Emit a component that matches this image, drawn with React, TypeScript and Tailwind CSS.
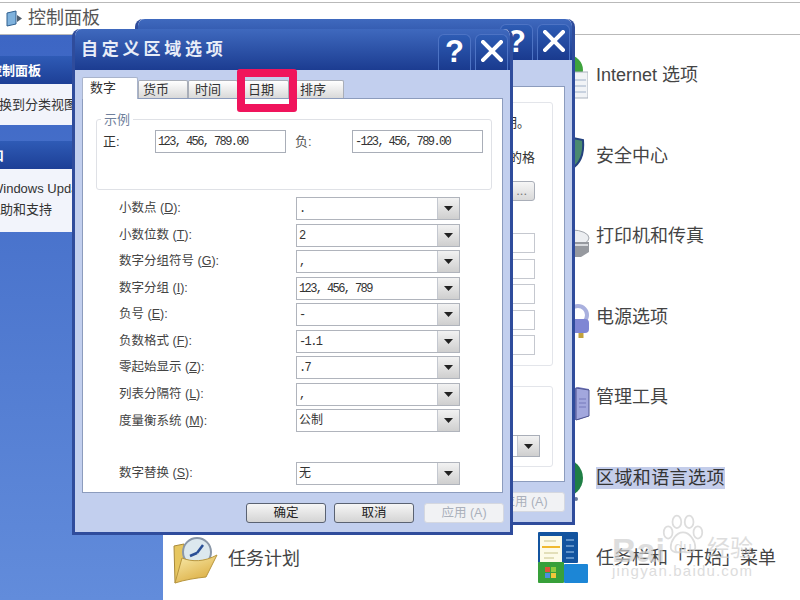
const selectRows = [
  { label: '小数点', key: 'D', value: '.' },
  { label: '小数位数', key: 'T', value: '2' },
  { label: '数字分组符号', key: 'G', value: ',' },
  { label: '数字分组', key: 'I', value: '123, 456, 789' },
  { label: '负号', key: 'E', value: '-' },
  { label: '负数格式', key: 'F', value: '-1.1' },
  { label: '零起始显示', key: 'Z', value: '.7' },
  { label: '列表分隔符', key: 'L', value: ',' },
  { label: '度量衡系统', key: 'M', value: '公制' },
];

const tabs = [
  { name: '货币', cls: 'w-[50px] pl-[4px]' },
  { name: '时间', cls: 'w-[50px] pl-[6px]' },
  { name: '日期', cls: 'w-[51px] pl-[9px]' },
  { name: '排序', cls: 'w-[55px] pl-[10px]' },
];

function DropButton() {
  return (
    <div className="flex h-full w-[22px] shrink-0 items-center justify-center border-l border-[#c4c8d0] bg-gradient-to-b from-[#f2f2f2] to-[#cfcfcf]">
      <svg width="9" height="5" viewBox="0 0 9 5">
        <path d="M0 0h9L4.5 5z" fill="#222" />
      </svg>
    </div>
  );
}

function SelectBox({ value }: { value: string }) {
  return (
    <div className="flex h-[23px] w-[164px] items-center border border-[#b0b4bc] bg-white">
      <span className="flex-1 pl-[2px] pt-[1px] font-['Liberation_Mono','Noto_Sans_CJK_SC',monospace] text-[12px] tracking-[-1.6px] text-[#333]">
        {value === '公制' || value === '无' ? <span className="tracking-normal">{value}</span> : value}
      </span>
      <DropButton />
    </div>
  );
}

function FormRow({ label, hotkey, value }: { label: string; hotkey: string; value: string }) {
  return (
    <div className="flex items-center">
      <div className="w-[177px] text-[12.5px] text-[#444]">
        {label} (<span className="underline">{hotkey}</span>):
      </div>
      <SelectBox value={value} />
    </div>
  );
}

function WinButton({ children, label }: { children: React.ReactNode; label: string }) {
  return (
    <div
      aria-label={label}
      className="flex h-[36px] w-[33px] items-center justify-center rounded-t-[6px] border border-b-0 border-[#4d73c4] bg-gradient-to-b from-[#2e5cb4] to-[#1a3a8e] font-['Liberation_Sans',sans-serif] text-[31px] font-bold text-white"
    >
      {children}
    </div>
  );
}

function CloseGlyph() {
  return (
    <svg className="-mt-[3px]" width="22" height="22" viewBox="0 0 22 22">
      <path d="M2 2l18 18M20 2L2 20" stroke="#fff" strokeWidth="4" strokeLinecap="square" />
    </svg>
  );
}

function TitleBar({ title }: { title?: string }) {
  return (
    <div className="flex h-[41px] shrink-0 items-end justify-between rounded-t-[7px] bg-gradient-to-b from-[#3f69be] to-[#1c3c91] pl-[6px] pr-[2px]">
      <div className="self-center pt-[1px] text-[17px] font-bold tracking-[3.8px] text-[#e8edf8]">{title}</div>
      <div className="flex gap-[4px]">
        <WinButton label="help">?</WinButton>
        <WinButton label="close">
          <CloseGlyph />
        </WinButton>
      </div>
    </div>
  );
}

function DlgButton({ children, disabled }: { children: React.ReactNode; disabled?: boolean }) {
  return (
    <div
      className={
        disabled
          ? 'flex h-[20px] w-[80px] items-center justify-center rounded-[3px] border border-[#d5d8e0] bg-[#f1f2f4] text-[12.5px] text-[#aab0bb]'
          : 'flex h-[20px] w-[80px] items-center justify-center rounded-[3px] border border-[#5a6272] bg-gradient-to-b from-[#f6f6f6] to-[#d4d4d4] text-[12.5px] text-[#222]'
      }
    >
      {children}
    </div>
  );
}

function Tabs() {
  return (
    <div className="flex h-[20px] items-end">
      <div className="z-10 flex h-[22px] w-[56px] translate-y-[1px] items-center rounded-t-[2px] border border-b-0 border-[#a9b4cc] bg-white pb-[1px] pl-[7px] text-[13px] text-[#333]">
        数字
      </div>
      {tabs.map((t) => (
        <div
          key={t.name}
          className={`flex h-[18px] items-center rounded-t-[2px] border border-b-0 border-[#a9aeb8] bg-gradient-to-b from-[#ffffff] to-[#d9d9d9] text-[13px] text-[#333] ${t.cls}`}
        >
          {t.name}
        </div>
      ))}
    </div>
  );
}

function FrontDialog() {
  return (
    <div className="absolute left-[72px] top-[29px] z-20 flex h-[506px] w-[441px] flex-col rounded-t-[8px] border-[3px] border-t-0 border-[#2f4c9c] bg-[#c2cfee]">
      <TitleBar title="自定义区域选项" />
      <div className="px-[7px] pt-[8px]">
        <Tabs />
        <div className="h-[395px] border border-[#8c9cbd] bg-white">
          <div className="relative ml-[13px] mt-[20px] h-[71px] w-[396px] rounded-[3px] border border-[#dfe1e6]">
            <span className="absolute -top-[10px] left-[4px] bg-white px-[3px] text-[13px] text-[#6f7f9c]">示例</span>
            <div className="flex items-center pl-[6px] pt-[10px]">
              <span className="w-[52px] text-[13px] text-[#333]">正:</span>
              <div className="flex h-[23px] w-[131px] items-center border border-[#a9aeb8] pl-[2px] font-['Liberation_Mono',monospace] text-[12px] tracking-[-1.6px] text-[#333]">
                123, 456, 789.00
              </div>
              <span className="ml-[9px] w-[57px] text-[13px] text-[#555]">负:</span>
              <div className="flex h-[23px] w-[131px] items-center border border-[#a9aeb8] pl-[2px] font-['Liberation_Mono',monospace] text-[12px] tracking-[-1.6px] text-[#333]">
                -123, 456, 789.00
              </div>
            </div>
          </div>
          <div className="ml-[36px] mt-[7px] flex flex-col gap-[3.55px]">
            {selectRows.map((r) => (
              <FormRow key={r.key} label={r.label} hotkey={r.key} value={r.value} />
            ))}
            <div className="mt-[26px]">
              <FormRow label="数字替换" hotkey="S" value="无" />
            </div>
          </div>
        </div>
        <div className="-mr-[1px] flex justify-end gap-[8px] pt-[10px]">
          <DlgButton>确定</DlgButton>
          <DlgButton>取消</DlgButton>
          <div className="ml-[2px]">
            <DlgButton disabled>应用 (A)</DlgButton>
          </div>
        </div>
      </div>
      {/* 日期 tab highlighted by the author of the screenshot */}
      <div className="absolute left-[162px] top-[40px] h-[43px] w-[60px] rounded-[3px] border-[8px] border-[#f0145c]" />
    </div>
  );
}

function BackDialog() {
  const inputs = ['mt-[32px]', 'mt-[6px]', 'mt-[5px]', 'mt-[6px]', 'mt-[5px]'];
  return (
    <div className="absolute left-[135px] top-[19px] z-10 flex h-[506px] w-[440px] flex-col rounded-t-[8px] border-[3px] border-t-0 border-[#2f4c9c] bg-[#c2cfee]">
      <TitleBar />
      <div className="px-[7px] pt-[26px]">
        <div className="h-[396px] border border-[#8c9cbd] bg-white pl-[20px] pr-[11px] pt-[15px]">
          <div className="flex h-[264px] flex-col items-end rounded-[3px] border border-[#e3e5ea] pr-[17px] pt-[10px] text-[13px] text-[#333]">
            <div className="pr-[5px]">日期。</div>
            <div className="mt-[15px]">的格</div>
            <div className="mt-[14px] flex h-[20px] w-[80px] items-center justify-end rounded-[3px] border border-[#a9aeb8] bg-gradient-to-b from-[#f6f6f6] to-[#d9d9d9] pr-[7px] text-[#777]">
              ...
            </div>
            {inputs.map((m, i) => (
              <div key={i} className={`h-[20px] w-[60px] border border-[#c5c8cf] ${m}`} />
            ))}
          </div>
          <div className="mt-[20px] flex h-[81px] items-end justify-end rounded-[3px] border border-[#e3e5ea] pb-[9px] pr-[12px]">
            <div className="flex h-[22px] w-[80px] justify-end border border-[#a9aeb8]">
              <DropButton />
            </div>
          </div>
        </div>
        <div className="flex justify-end pt-[10px]">
          <DlgButton disabled>应用 (A)</DlgButton>
        </div>
      </div>
    </div>
  );
}

function SidePanel({ title, titleClass, bodyClass, children }: { title: string; titleClass: string; bodyClass: string; children: React.ReactNode }) {
  return (
    <div>
      <div className="flex h-[28px] items-center bg-gradient-to-b from-[#2f5bb6] to-[#1d3f96] pt-[2px] text-[13px] font-bold text-white">
        <span className={titleClass}>{title}</span>
      </div>
      <div className={`bg-[#f2f4fb] text-[13px] text-[#333] ${bodyClass}`}>{children}</div>
    </div>
  );
}

function InternetIcon() {
  return (
    <svg width="50" height="48" viewBox="0 0 50 48">
      <circle cx="30" cy="19" r="15" fill="#3fa33d" />
      <rect x="20" y="21" width="30" height="26" fill="#f1f3f6" stroke="#aab2be" />
      <path d="M37 29h11M37 35h11M37 41h11" stroke="#9fb0c8" />
    </svg>
  );
}

function ShieldIcon() {
  return (
    <svg width="48" height="48" viewBox="0 0 48 48">
      <path d="M10 9l25-3 10 2c1 12-1 23-12 29C20 33 10 24 10 9z" fill="#4a8a70" stroke="#24427e" strokeWidth="2" />
    </svg>
  );
}

function PrinterIcon() {
  return (
    <svg width="52" height="48" viewBox="0 0 52 48">
      <ellipse cx="34" cy="26" rx="17" ry="8" fill="#eceef1" stroke="#a2a6ad" />
      <path d="M16 30h35v10l-8 5H16z" fill="#96999f" />
      <path d="M37 33h13" stroke="#d8dade" strokeWidth="2" />
    </svg>
  );
}

function PowerIcon() {
  return (
    <svg width="52" height="48" viewBox="0 0 52 48">
      <circle cx="40" cy="22" r="9" fill="none" stroke="#a9b0de" strokeWidth="4" />
      <rect x="22" y="26" width="29" height="14" rx="4" fill="#7f86d4" />
      <path d="M43 40v5" stroke="#c2a23c" strokeWidth="5" />
    </svg>
  );
}

function AdminIcon() {
  return (
    <svg width="52" height="48" viewBox="0 0 52 48">
      <path d="M20 20l20-6 11 2v27l-11 4H20z" fill="#777cc4" />
      <path d="M38 15l13 2v26l-13 4z" fill="#a2a7dd" stroke="#4f548f" />
      <path d="M41 26h7M41 30h7M41 34h7" stroke="#7479bb" />
    </svg>
  );
}

function GlobeIcon() {
  return (
    <svg width="48" height="48" viewBox="0 0 48 48">
      <circle cx="26" cy="24" r="19" fill="#1f7f45" />
      <circle cx="38" cy="45" r="2" fill="#6a7a99" />
    </svg>
  );
}

function TaskbarIcon() {
  return (
    <svg width="50" height="52" viewBox="0 0 50 52">
      <rect x="0" y="0" width="40" height="31" rx="1" fill="#13549f" />
      <rect x="2" y="4" width="22" height="27" fill="#fdfbe8" />
      <path d="M4 15h18" stroke="#f0b92e" strokeWidth="2" />
      <path d="M6 9h12M6 21h14M6 26h10" stroke="#c9c48a" />
      <path d="M28 8h8M28 14h8M28 20h8M28 26h8" stroke="#a9cdf0" />
      <rect x="0" y="30" width="26" height="21" rx="1" fill="#38a03a" />
      <rect x="26" y="32" width="24" height="19" rx="1" fill="#1c86d6" />
      <rect x="7" y="35" width="5" height="5" fill="#e0523a" />
      <rect x="13" y="35" width="5" height="5" fill="#8ecb40" />
      <rect x="7" y="41" width="5" height="5" fill="#4a8fe0" />
      <rect x="13" y="41" width="5" height="5" fill="#f0c63a" />
    </svg>
  );
}

function FolderClockIcon() {
  return (
    <svg width="46" height="48" viewBox="0 0 46 48">
      <defs>
        <linearGradient id="folderFront" x1="0" y1="0" x2="0.6" y2="1">
          <stop offset="0" stopColor="#f9ecae" />
          <stop offset="1" stopColor="#dcae42" />
        </linearGradient>
      </defs>
      <path d="M2 10l10-2v32L3 47z" fill="#e6c660" stroke="#a98a3a" />
      <circle cx="25" cy="16" r="14" fill="#dce8ee" stroke="#8a97a8" strokeWidth="2" />
      <path d="M25 17l6-8M25 17l-7 3" stroke="#2a4f96" strokeWidth="2.5" />
      <path d="M3 47l7-25c10 4 22 4 35-3L34 41c-10 1-22 3-31 6z" fill="url(#folderFront)" stroke="#b8963e" />
    </svg>
  );
}

const rightItems = [
  { text: 'Internet 选项', icon: <InternetIcon />, highlight: false },
  { text: '安全中心', icon: <ShieldIcon />, highlight: false },
  { text: '打印机和传真', icon: <PrinterIcon />, highlight: false },
  { text: '电源选项', icon: <PowerIcon />, highlight: false },
  { text: '管理工具', icon: <AdminIcon />, highlight: false },
  { text: '区域和语言选项', icon: <GlobeIcon />, highlight: true },
  { text: '任务栏和「开始」菜单', icon: <TaskbarIcon />, highlight: false },
];

function Watermark() {
  return (
    <div className="absolute left-[612px] top-[514px] z-30 h-[68px] w-[146px] text-[#cfcfcf] opacity-70">
      <svg className="absolute left-[50px] top-0" width="42" height="42" viewBox="0 0 48 46" fill="none" stroke="#cfcfcf" strokeWidth="2">
        <ellipse cx="17" cy="8" rx="5" ry="7" />
        <ellipse cx="31" cy="8" rx="5" ry="7" />
        <ellipse cx="7" cy="20" rx="5" ry="7" />
        <ellipse cx="41" cy="20" rx="5" ry="7" />
        <path d="M24 20c-8 0-14 10-14 17 0 6 8 7 14 5 6 2 14 1 14-5 0-7-6-17-14-17z" />
      </svg>
      <div className="absolute left-0 top-[19px] font-['Liberation_Sans',sans-serif] text-[34px] font-bold leading-none">Bai</div>
      <div className="absolute left-[62px] top-[26px] font-['Liberation_Sans',sans-serif] text-[16px] leading-none">du</div>
      <div className="absolute left-[95px] top-[23px] text-[23px] leading-none">经验</div>
      <div className="absolute left-0 top-[49px] font-['Liberation_Sans',sans-serif] text-[15px] leading-none tracking-[1.2px]">jingyan.baidu.com</div>
    </div>
  );
}

export default function App() {
  return (
    <div className="relative h-[600px] w-[800px] overflow-hidden bg-white font-['Liberation_Sans','Noto_Sans_CJK_SC',sans-serif]">
      {/* address bar */}
      <div className="mt-[2px] flex h-[33px] items-center gap-[5px] border-y border-[#b9b9b9] pl-[6px]">
        <svg width="17" height="17" viewBox="0 0 17 17">
          <path d="M1 3l9-2v13l-9 2z" fill="#7fb2dd" stroke="#2f5f8e" />
          <path d="M11 5l5 3.5-5 3.5z" fill="#4f5f70" />
        </svg>
        <span className="text-[18px] text-[#555]">控制面板</span>
      </div>

      <div className="flex h-[565px]">
        {/* left task pane */}
        <div className="flex w-[163px] shrink-0 flex-col overflow-hidden bg-gradient-to-b from-[#3d66c4] to-[#628cdb] pt-[21px]">
          <SidePanel title="控制面板" titleClass="-ml-[11px]" bodyClass="h-[41px] pt-[11px]">
            <div className="-ml-[1px] whitespace-nowrap">换到分类视图</div>
          </SidePanel>
          <div className="mt-[16px]">
            <SidePanel title="口" titleClass="-ml-[9px]" bodyClass="h-[63px] pt-[10px]">
              <div className="-ml-[9px] whitespace-nowrap">Windows Update</div>
              <div className="mt-[1px] whitespace-nowrap">助和支持</div>
            </SidePanel>
          </div>
        </div>

        {/* icons */}
        <div className="flex flex-1">
          <div className="flex w-[375px] flex-col justify-end">
            <div className="flex h-[80.5px] items-center gap-[10px] pl-[9px]">
              <FolderClockIcon />
              <span className="text-[18px] text-[#444]">任务计划</span>
            </div>
          </div>
          <div className="flex flex-1 flex-col">
            {rightItems.map((item) => (
              <div key={item.text} className="flex h-[80.5px] items-center">
                <div className="flex w-[58px] shrink-0 justify-start">{item.icon}</div>
                <span
                  className={
                    item.highlight
                      ? 'bg-[#c4cdea] text-[18px] leading-[22px] tracking-[0.4px] text-[#333]'
                      : 'whitespace-nowrap text-[18px] leading-[22px] text-[#444]'
                  }
                >
                  {item.text}
                </span>
              </div>
            ))}
          </div>
        </div>
      </div>

      <BackDialog />
      <FrontDialog />
      <Watermark />
    </div>
  );
}
